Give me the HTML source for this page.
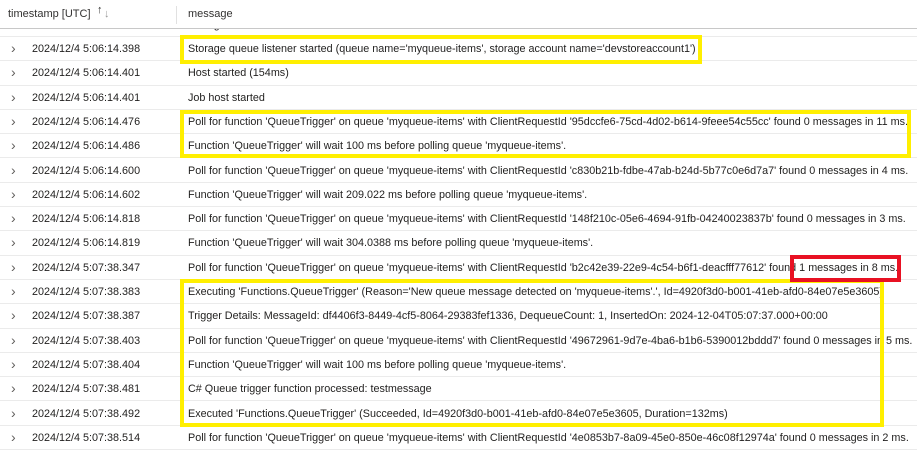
<!DOCTYPE html>
<html><head><meta charset="utf-8"><style>
*{margin:0;padding:0;box-sizing:border-box}
body{width:917px;height:446px;overflow:hidden;background:#fff;font-family:"Liberation Sans",sans-serif;font-size:10.8px;color:#201f1e;position:relative}
.hdr{position:absolute;top:0;left:0;width:917px;height:29px;border-bottom:1px solid #c8c8c8;background:#fff;z-index:2}
.hdr span{position:absolute;top:8px;font-size:11px;color:#323130}
.sep{position:absolute;left:176px;top:6px;width:1px;height:18px;background:#e1e1e1}
.row{position:absolute;left:0;width:917px;height:24.3px;border-bottom:1px solid #ebebeb;white-space:nowrap}
.row .c{position:absolute;left:11px;top:3px;font-size:14px;color:#605e5c}
.row .t{position:absolute;left:32px;top:6px}
.row .m{position:absolute;left:188px;top:6px}
.box{position:absolute;border:4px solid #ffef00;z-index:3}
.red{position:absolute;border:4px solid #e81123;z-index:3}
</style></head><body>
<div class="hdr"><span style="left:8px">timestamp [UTC]</span><span style="left:97px;top:4px;font-size:11px;color:#323130">↑</span><span style="left:104px;top:8px;font-size:11px;color:#999">↓</span><div class="sep"></div><span style="left:188px">message</span></div>

<div class="row" style="top:12.7px"><span class="c">›</span><span class="t">2024/12/4 5:06:14.398</span><span class="m">Storage</span></div>
<div class="row" style="top:37px"><span class="c">›</span><span class="t">2024/12/4 5:06:14.398</span><span class="m">Storage queue listener started (queue name='myqueue-items', storage account name='devstoreaccount1')</span></div>
<div class="row" style="top:61.3px"><span class="c">›</span><span class="t">2024/12/4 5:06:14.401</span><span class="m">Host started (154ms)</span></div>
<div class="row" style="top:85.6px"><span class="c">›</span><span class="t">2024/12/4 5:06:14.401</span><span class="m">Job host started</span></div>
<div class="row" style="top:109.9px"><span class="c">›</span><span class="t">2024/12/4 5:06:14.476</span><span class="m">Poll for function 'QueueTrigger' on queue 'myqueue-items' with ClientRequestId '95dccfe6-75cd-4d02-b614-9feee54c55cc' found 0 messages in 11 ms.</span></div>
<div class="row" style="top:134.2px"><span class="c">›</span><span class="t">2024/12/4 5:06:14.486</span><span class="m">Function 'QueueTrigger' will wait 100 ms before polling queue 'myqueue-items'.</span></div>
<div class="row" style="top:158.5px"><span class="c">›</span><span class="t">2024/12/4 5:06:14.600</span><span class="m">Poll for function 'QueueTrigger' on queue 'myqueue-items' with ClientRequestId 'c830b21b-fdbe-47ab-b24d-5b77c0e6d7a7' found 0 messages in 4 ms.</span></div>
<div class="row" style="top:182.8px"><span class="c">›</span><span class="t">2024/12/4 5:06:14.602</span><span class="m">Function 'QueueTrigger' will wait 209.022 ms before polling queue 'myqueue-items'.</span></div>
<div class="row" style="top:207.1px"><span class="c">›</span><span class="t">2024/12/4 5:06:14.818</span><span class="m">Poll for function 'QueueTrigger' on queue 'myqueue-items' with ClientRequestId '148f210c-05e6-4694-91fb-04240023837b' found 0 messages in 3 ms.</span></div>
<div class="row" style="top:231.4px"><span class="c">›</span><span class="t">2024/12/4 5:06:14.819</span><span class="m">Function 'QueueTrigger' will wait 304.0388 ms before polling queue 'myqueue-items'.</span></div>
<div class="row" style="top:255.7px"><span class="c">›</span><span class="t">2024/12/4 5:07:38.347</span><span class="m">Poll for function 'QueueTrigger' on queue 'myqueue-items' with ClientRequestId 'b2c42e39-22e9-4c54-b6f1-deacfff77612' found 1 messages in 8 ms.</span></div>
<div class="row" style="top:280px"><span class="c">›</span><span class="t">2024/12/4 5:07:38.383</span><span class="m">Executing 'Functions.QueueTrigger' (Reason='New queue message detected on 'myqueue-items'.', Id=4920f3d0-b001-41eb-afd0-84e07e5e3605)</span></div>
<div class="row" style="top:304.3px"><span class="c">›</span><span class="t">2024/12/4 5:07:38.387</span><span class="m">Trigger Details: MessageId: df4406f3-8449-4cf5-8064-29383fef1336, DequeueCount: 1, InsertedOn: 2024-12-04T05:07:37.000+00:00</span></div>
<div class="row" style="top:328.6px"><span class="c">›</span><span class="t">2024/12/4 5:07:38.403</span><span class="m">Poll for function 'QueueTrigger' on queue 'myqueue-items' with ClientRequestId '49672961-9d7e-4ba6-b1b6-5390012bddd7' found 0 messages in 5 ms.</span></div>
<div class="row" style="top:352.9px"><span class="c">›</span><span class="t">2024/12/4 5:07:38.404</span><span class="m">Function 'QueueTrigger' will wait 100 ms before polling queue 'myqueue-items'.</span></div>
<div class="row" style="top:377.2px"><span class="c">›</span><span class="t">2024/12/4 5:07:38.481</span><span class="m">C# Queue trigger function processed: testmessage</span></div>
<div class="row" style="top:401.5px"><span class="c">›</span><span class="t">2024/12/4 5:07:38.492</span><span class="m">Executed 'Functions.QueueTrigger' (Succeeded, Id=4920f3d0-b001-41eb-afd0-84e07e5e3605, Duration=132ms)</span></div>
<div class="row" style="top:425.8px"><span class="c">›</span><span class="t">2024/12/4 5:07:38.514</span><span class="m">Poll for function 'QueueTrigger' on queue 'myqueue-items' with ClientRequestId '4e0853b7-8a09-45e0-850e-46c08f12974a' found 0 messages in 2 ms.</span></div>

<div class="box" style="left:180px;top:35px;width:522px;height:29px"></div>
<div class="box" style="left:180px;top:110px;width:731px;height:48px"></div>
<div class="box" style="left:180px;top:279px;width:704px;height:148px"></div>
<div class="red" style="left:790px;top:255px;width:111px;height:27px"></div>
</body></html>
